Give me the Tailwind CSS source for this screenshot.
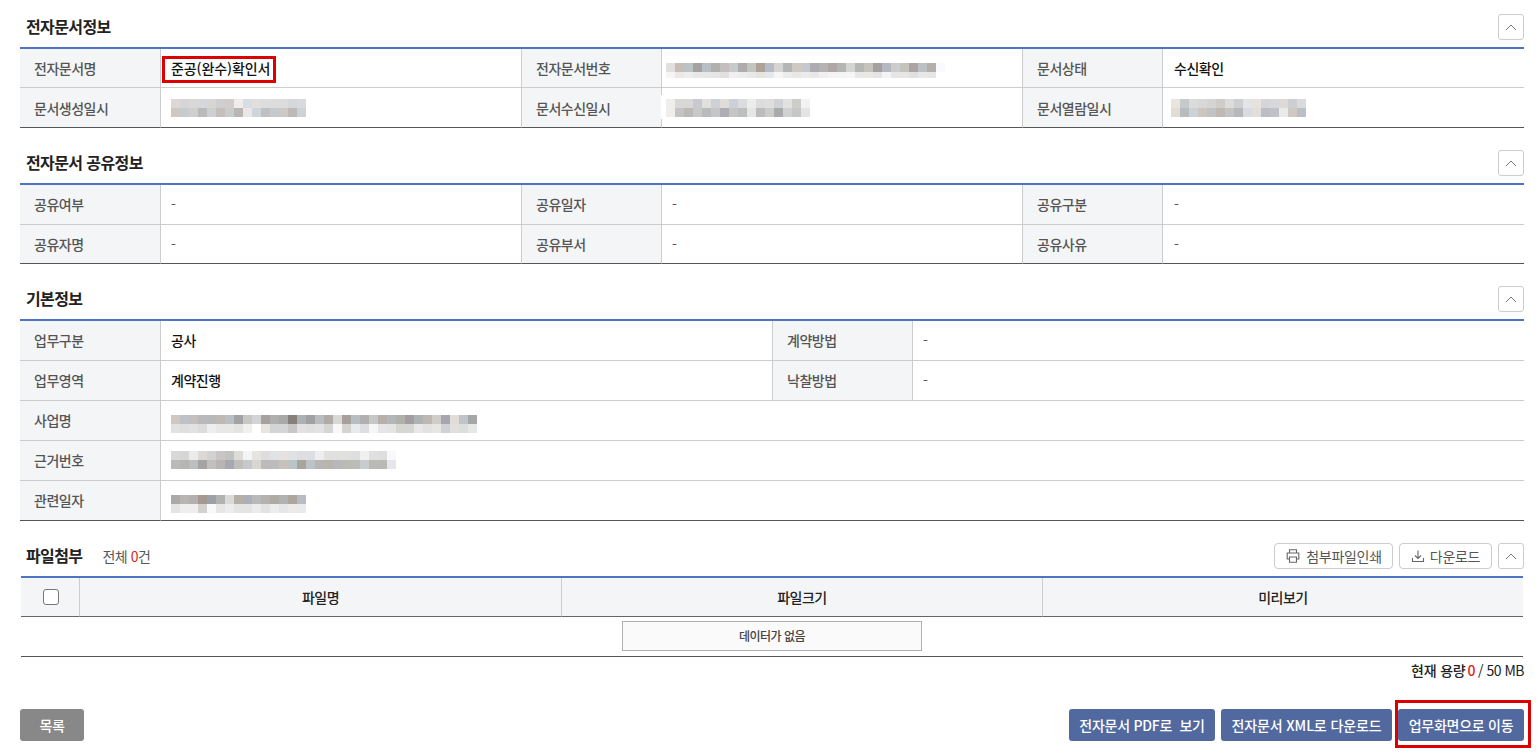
<!DOCTYPE html>
<html lang="ko">
<head>
<meta charset="UTF-8">
<title>전자문서정보</title>
<script src="https://cdn.jsdelivr.net/npm/@tailwindcss/browser@4"></script>
</head>
<body class="bg-white font-['Noto_Sans_CJK_KR','Noto_Sans',sans-serif] text-[14px] text-[#111] tracking-[-0.5px] overflow-hidden">
<div class="relative w-[1540px] h-[755px] pt-[14px] pl-[20px] pr-[16px]">

  <!-- 전자문서정보 -->
  <section>
    <div class="h-[33px] flex justify-between items-start">
      <h2 class="pl-[6px] text-[16px] leading-[24px] font-bold text-[#222] tracking-[-0.6px]">전자문서정보</h2>
      <button class="w-[26px] h-[26px] border border-[#ccc] rounded-[3px] flex items-center justify-center"><svg width="12" height="7" viewBox="0 0 12 7" fill="none" stroke="#777"><path d="M1 6l5-5 5 5"/></svg></button>
    </div>
    <div class="border-t-2 border-[#4f74c4] grid grid-cols-[141px_361px_140px_361px_140px_361px]">
      <div class="h-[39px] border-b border-r border-[#ccc] bg-[#f4f5f7] pl-[14px] flex items-center text-[#555] font-medium">전자문서명</div>
      <div class="h-[39px] border-b border-r border-[#ccc] pl-[10px] flex items-center font-medium tracking-[-0.1px]">준공(완수)확인서</div>
      <div class="h-[39px] border-b border-r border-[#ccc] bg-[#f4f5f7] pl-[14px] flex items-center text-[#555] font-medium">전자문서번호</div>
      <div class="h-[39px] border-b border-r border-[#ccc] pl-[4px] flex items-center"><div data-mosaic="b" class="mt-[5px]"></div></div>
      <div class="h-[39px] border-b border-r border-[#ccc] bg-[#f4f5f7] pl-[14px] flex items-center text-[#555] font-medium">문서상태</div>
      <div class="h-[39px] border-b border-[#ccc] pl-[11px] flex items-center font-medium">수신확인</div>

      <div class="h-[40px] pt-[1px] border-b border-r border-b-[#555] border-r-[#ccc] bg-[#f4f5f7] pl-[14px] flex items-center text-[#555] font-medium">문서생성일시</div>
      <div class="h-[40px] border-b border-r border-b-[#555] border-r-[#ccc] pl-[10px] flex items-center"><div data-mosaic="a"></div></div>
      <div class="h-[40px] pt-[1px] border-b border-r border-b-[#555] border-r-[#ccc] bg-[#f4f5f7] pl-[14px] flex items-center text-[#555] font-medium">문서수신일시</div>
      <div class="h-[40px] border-b border-r border-b-[#555] border-r-[#ccc] pl-[4px] flex items-center"><div data-mosaic="c"></div></div>
      <div class="h-[40px] pt-[1px] border-b border-r border-b-[#555] border-r-[#ccc] bg-[#f4f5f7] pl-[14px] flex items-center text-[#555] font-medium">문서열람일시</div>
      <div class="h-[40px] border-b border-[#555] pl-[8px] flex items-center"><div data-mosaic="d"></div></div>
    </div>
  </section>

  <!-- 전자문서 공유정보 -->
  <section class="mt-[22px]">
    <div class="h-[33px] flex justify-between items-start">
      <h2 class="pl-[6px] text-[16px] leading-[24px] font-bold text-[#222] tracking-[-0.6px]">전자문서 공유정보</h2>
      <button class="w-[26px] h-[26px] border border-[#ccc] rounded-[3px] flex items-center justify-center"><svg width="12" height="7" viewBox="0 0 12 7" fill="none" stroke="#777"><path d="M1 6l5-5 5 5"/></svg></button>
    </div>
    <div class="border-t-2 border-[#4f74c4] grid grid-cols-[141px_361px_140px_361px_140px_361px]">
      <div class="h-[40px] border-b border-r border-[#ccc] bg-[#f4f5f7] pl-[14px] flex items-center text-[#555] font-medium">공유여부</div>
      <div class="h-[40px] border-b border-r border-[#ccc] pl-[10px] flex items-center text-[#555]">-</div>
      <div class="h-[40px] border-b border-r border-[#ccc] bg-[#f4f5f7] pl-[14px] flex items-center text-[#555] font-medium">공유일자</div>
      <div class="h-[40px] border-b border-r border-[#ccc] pl-[10px] flex items-center text-[#555]">-</div>
      <div class="h-[40px] border-b border-r border-[#ccc] bg-[#f4f5f7] pl-[14px] flex items-center text-[#555] font-medium">공유구분</div>
      <div class="h-[40px] border-b border-[#ccc] pl-[11px] flex items-center text-[#555]">-</div>

      <div class="h-[39px] pt-[1px] border-b border-r border-b-[#555] border-r-[#ccc] bg-[#f4f5f7] pl-[14px] flex items-center text-[#555] font-medium">공유자명</div>
      <div class="h-[39px] pt-[1px] border-b border-r border-b-[#555] border-r-[#ccc] pl-[10px] flex items-center text-[#555]">-</div>
      <div class="h-[39px] pt-[1px] border-b border-r border-b-[#555] border-r-[#ccc] bg-[#f4f5f7] pl-[14px] flex items-center text-[#555] font-medium">공유부서</div>
      <div class="h-[39px] pt-[1px] border-b border-r border-b-[#555] border-r-[#ccc] pl-[10px] flex items-center text-[#555]">-</div>
      <div class="h-[39px] pt-[1px] border-b border-r border-b-[#555] border-r-[#ccc] bg-[#f4f5f7] pl-[14px] flex items-center text-[#555] font-medium">공유사유</div>
      <div class="h-[39px] pt-[1px] border-b border-[#555] pl-[11px] flex items-center text-[#555]">-</div>
    </div>
  </section>

  <!-- 기본정보 -->
  <section class="mt-[22px]">
    <div class="h-[33px] flex justify-between items-start">
      <h2 class="pl-[6px] text-[16px] leading-[24px] font-bold text-[#222] tracking-[-0.6px]">기본정보</h2>
      <button class="w-[26px] h-[26px] border border-[#ccc] rounded-[3px] flex items-center justify-center"><svg width="12" height="7" viewBox="0 0 12 7" fill="none" stroke="#777"><path d="M1 6l5-5 5 5"/></svg></button>
    </div>
    <div class="border-t-2 border-[#4f74c4] grid grid-cols-[141px_612px_140px_611px]">
      <div class="h-[40px] border-b border-r border-[#ccc] bg-[#f4f5f7] pl-[14px] flex items-center text-[#555] font-medium">업무구분</div>
      <div class="h-[40px] border-b border-r border-[#ccc] pl-[10px] flex items-center font-medium">공사</div>
      <div class="h-[40px] border-b border-r border-[#ccc] bg-[#f4f5f7] pl-[14px] flex items-center text-[#555] font-medium">계약방법</div>
      <div class="h-[40px] border-b border-[#ccc] pl-[10px] flex items-center text-[#555]">-</div>

      <div class="h-[40px] border-b border-r border-[#ccc] bg-[#f4f5f7] pl-[14px] flex items-center text-[#555] font-medium">업무영역</div>
      <div class="h-[40px] border-b border-r border-[#ccc] pl-[10px] flex items-center font-medium">계약진행</div>
      <div class="h-[40px] border-b border-r border-[#ccc] bg-[#f4f5f7] pl-[14px] flex items-center text-[#555] font-medium">낙찰방법</div>
      <div class="h-[40px] border-b border-[#ccc] pl-[10px] flex items-center text-[#555]">-</div>

      <div class="h-[40px] border-b border-r border-[#ccc] bg-[#f4f5f7] pl-[14px] flex items-center text-[#555] font-medium">사업명</div>
      <div class="h-[40px] col-span-3 border-b border-[#ccc] pl-[10px] flex items-center"><div data-mosaic="e" class="mt-[6px]"></div></div>

      <div class="h-[40px] border-b border-r border-[#ccc] bg-[#f4f5f7] pl-[14px] flex items-center text-[#555] font-medium">근거번호</div>
      <div class="h-[40px] col-span-3 border-b border-[#ccc] pl-[10px] flex items-center"><div data-mosaic="f" class="mb-[2px]"></div></div>

      <div class="h-[40px] border-b border-r border-b-[#555] border-r-[#ccc] bg-[#f4f5f7] pl-[14px] flex items-center text-[#555] font-medium">관련일자</div>
      <div class="h-[40px] pt-[1px] col-span-3 border-b border-[#555] pl-[10px] flex items-center"><div data-mosaic="g" class="mt-[5px]"></div></div>
    </div>
  </section>

  <!-- 파일첨부 -->
  <section class="mt-[22px]">
    <div class="h-[33px] flex items-start">
      <h2 class="pl-[6px] text-[16px] leading-[24px] font-bold text-[#222] tracking-[-0.6px]">파일첨부</h2>
      <p class="ml-[20px] leading-[26px] text-[#555]">전체 <span class="text-[#e01b1b]">0</span>건</p>
      <button class="ml-auto w-[119px] h-[26px] border border-[#ccc] rounded-[4px] flex items-center justify-center gap-[5px] text-[#555] tracking-[-0.3px]">
        <svg width="16" height="16" viewBox="0 0 16 16" fill="none" stroke="#666" stroke-width="1.1"><path d="M4.5 5V1.8h7V5M4.5 11H2.2V5h11.6v6h-2.3"/><path d="M4.5 9h7v5.2h-7z"/></svg>
        첨부파일인쇄
      </button>
      <button class="ml-[6px] w-[93px] h-[26px] border border-[#ccc] rounded-[4px] flex items-center justify-center gap-[5px] text-[#555] tracking-[-0.3px]">
        <svg width="14" height="14" viewBox="0 0 14 14" fill="none" stroke="#666" stroke-width="1.1"><path d="M7 1.5v8M4 6.5l3 3 3-3M1.5 9v3.5h11V9"/></svg>
        다운로드
      </button>
      <button class="ml-[6px] w-[26px] h-[26px] border border-[#ccc] rounded-[3px] flex items-center justify-center"><svg width="12" height="7" viewBox="0 0 12 7" fill="none" stroke="#777"><path d="M1 6l5-5 5 5"/></svg></button>
    </div>
    <div class="mx-[1px] border-t-2 border-[#4f74c4] grid grid-cols-[59px_482px_481px_480px]">
      <div class="h-[39px] border-b border-r border-b-[#666] border-r-[#ccc] bg-[#f4f5f7] pl-[1px] flex items-center justify-center"><span class="w-[16px] h-[16px] bg-white border border-[#777] rounded-[3px]"></span></div>
      <div class="h-[39px] border-b border-r border-b-[#666] border-r-[#ccc] bg-[#f4f5f7] flex items-center justify-center text-[#222] font-medium">파일명</div>
      <div class="h-[39px] border-b border-r border-b-[#666] border-r-[#ccc] bg-[#f4f5f7] flex items-center justify-center text-[#222] font-medium">파일크기</div>
      <div class="h-[39px] border-b border-b-[#666] bg-[#f4f5f7] flex items-center justify-center text-[#222] font-medium">미리보기</div>
      <div class="col-span-4 h-[40px] pt-[4px] border-b border-[#555] flex items-start justify-center">
        <div class="w-[300px] h-[30px] bg-[#fafafa] border border-[#b0b0b0] flex items-center justify-center text-[12px] text-[#444] font-medium">데이터가 없음</div>
      </div>
    </div>
    <p class="mt-[3px] text-right leading-[20px] font-medium text-[#222]"><span class="tracking-[-0.2px]">현재 용량</span><span class="ml-[2px] text-[#e01b1b]">0</span><span class="ml-[3px] font-normal">/ 50 MB</span></p>
  </section>

  <!-- 하단 버튼 -->
  <div class="mt-[29px] flex">
    <button class="w-[64px] h-[32px] rounded-[3px] bg-[#888] text-white font-medium">목록</button>
    <button class="ml-auto w-[146px] h-[32px] rounded-[3px] bg-[#52699f] text-white font-medium tracking-[-0.25px]">전자문서 PDF로 &nbsp;보기</button>
    <button class="ml-[6px] w-[171px] h-[32px] rounded-[3px] bg-[#52699f] text-white font-medium tracking-[-0.1px]">전자문서 XML로 다운로드</button>
    <button class="ml-[6px] w-[126px] h-[32px] rounded-[3px] bg-[#52699f] text-white font-medium tracking-[-0.25px]">업무화면으로 이동</button>
  </div>

  <!-- 강조 표시 -->
  <div class="absolute left-[162px] top-[56px] w-[114px] h-[27px] border-[3px] border-[#dc0000]"></div>
  <div class="absolute left-[1395px] top-[700px] w-[136px] h-[48px] border-[3px] border-[#dc0000]"></div>
  <!-- 모자이크 가장자리 -->
  <div class="absolute left-[661px] top-[95px] w-[5px] h-[24px] bg-white"></div>
</div>

<script>
  // 가려진 값: 모자이크 색상 데이터
  const mosaics = {
    a: { h: [9, 9], rows: [
      'ddd8d5 d5d5d5 d8d8d8 d4d8da d8d6d4 d2ced0 d2cdca efecec d8dde2 e0dfde dddddd dcdcdc dcdcdc d4d8da d8dadc',
      'cdc8c4 c8cbcd cfcfcf b8babc cdcfd0 c4bfbc c9cbcd b9b5b2 e8e6e6 cfd5da c0c0c0 c6c9cb cdc9c5 bdb9b6 cdd2d6' ] },
    b: { h: [9, 6], rows: [
      'e2e0df c8bdb6 bcc3c7 a5a1a2 b8bec6 b2b0ae c4bfbe c6cacb adabab c4c4c0 aea297 b5bcc6 d6d3d3 b3b5b7 cec9c3 c5c9cf aeacb0 b5b3b3 ada8a7 b4b6b6 d4d4d2 b5b7b7 c5c3bb a3a0a0 b5b8c2 cccccc c4c3be aba4a2 bcc0c4 b4aeac f8fbfe',
      'f6f5f4 eee8e4 ebedee e8e8e8 e6e8e8 e6e6e4 e2e0de f0f0f2 ececec e8e8e6 e6e4e0 e4e8ec f6f6f6 ececec eae8e4 ececec e8e8e8 f0f0f0 f4f4f4 f4f4f4 f6f6f6 e8e8e8 ebe9e5 e4e4e4 f2f4f6 e6e6e6 e8e6e4 e2e0de e8e8e8 e6e6e6 ffffff' ] },
    c: { h: [9, 9], rows: [
      'f0eeea d8d8d8 dad8d6 c8cad0 e0e0de ced2d6 e0dcd8 ccd0d8 dadcde ececec dcdcdc e0dedc d0d2d8 e2e2e0 cfcdc8 f2f2f4',
      'f0eeea c4c4c4 bcbab8 c8c8c8 b8babc c4c6c8 aeaeb2 c4c6c6 bcbec0 e6e6e6 bcbcbc ccccca a8aaac d0d2d2 c6c8c8 e2e4e6' ] },
    d: { h: [9, 9], rows: [
      'e8e4de c6cacc dadcdc d8d8d8 d4d4d4 d0ccca dcdcdc cdcfd2 e2e4e8 e6e2de d4d6da d8d8dc ded9d8 ccced2 d8dadc',
      'e0dcd6 b9bcbe cdd2d6 cbc6c0 c0c2c6 bfb9b2 c4c4c4 b6b8bc d8dce0 e2dedc bcbec6 c0c2c8 eaeae8 cfc9c6 bcc0c6' ] },
    e: { h: [9, 9], rows: [
      'cfc8c2 bdc2c8 c2bfbc b9b9bc b6b8ba bfb9b4 bcc0c4 a3a3a6 c8c8c6 d2d4d6 a6a29e afafaf a9a9a7 85807c adb2b4 a0a2a2 babcbe afaba7 d8d8d6 a69f9b b6bdc4 b0b0b0 c6c8c8 b5b0aa b3b7ba b1b1a9 a19da0 adb2b4 bdb8b4 d0ccca a5a6ae e0dcd8 c0c4c8 a6a6a6',
      'e2e2e2 dfdfdf e2e2e4 dcdcdc eeeeee e8e8e8 e8e8e6 e4e4e4 f0f0ee ffffff e8e4de d2d4d6 d4d6d6 c8c6c6 e2e2e2 e0e0e0 e0e2e4 d6d6d4 f8f8fa d6d4d0 e8eaee dcdee0 f6f6f8 e6e6e6 e4e4e4 d6d6d2 d6d6d2 e8e8ea e4e2e0 e8e6e2 ced2d6 e2e0de dcdedc e6e8e8' ] },
    f: { h: [9, 9], rows: [
      'd8d8d6 d6d6d6 ebebeb dcd8d4 d2d2d2 cbc6c6 c0c2c4 dedcd6 f2f4f6 e6e4e0 e0dedc e0e2e6 e6e2de dfe1e4 dcdee0 dcdee2 eeeeee e2e0de e0e0de e0e0de dedede f0f0f0 e0e0e0 dedede f6f8fb',
      'bcbab8 b8b6b4 bcbfc0 a6a4a2 c2bfbc b8b5b4 a8a8b0 c0bebc c6c8ca d8d6d2 bcbabb bcbcbc c6c2bb b9c4c6 a8a49e bcc2c6 b8b6b4 b8b4ae b8b8ba bcbab6 bcbcba c8ccce bbb9b6 bbb9b6 e4e6ea' ] },
    g: { h: [9, 9], rows: [
      'acaaa8 b8b4b2 b4b0ae a49890 9da0a6 b2b2b2 dcdad8 b4b0a8 abafb9 b9b9b9 b4b2ae aeaaa4 b2b2b2 aea69e b6bcc2',
      'e4e4e4 eeeeee eeeeee d4d2ce f8f9fb e8e6e4 ececec e4e4e4 e4e4e4 ececec e2e2e2 ececec e4e6e8 eeeae8 e8eaec' ] },
  };

  document.querySelectorAll('[data-mosaic]').forEach(el => {
    const m = mosaics[el.dataset.mosaic];
    m.rows.forEach((row, r) => {
      const line = document.createElement('div');
      line.className = 'flex';
      row.split(' ').forEach(c => {
        const cell = document.createElement('span');
        cell.className = 'block w-[9px]';
        cell.style.height = m.h[r] + 'px';
        cell.style.background = '#' + c;
        line.appendChild(cell);
      });
      el.appendChild(line);
    });
  });
</script>
</body>
</html>
